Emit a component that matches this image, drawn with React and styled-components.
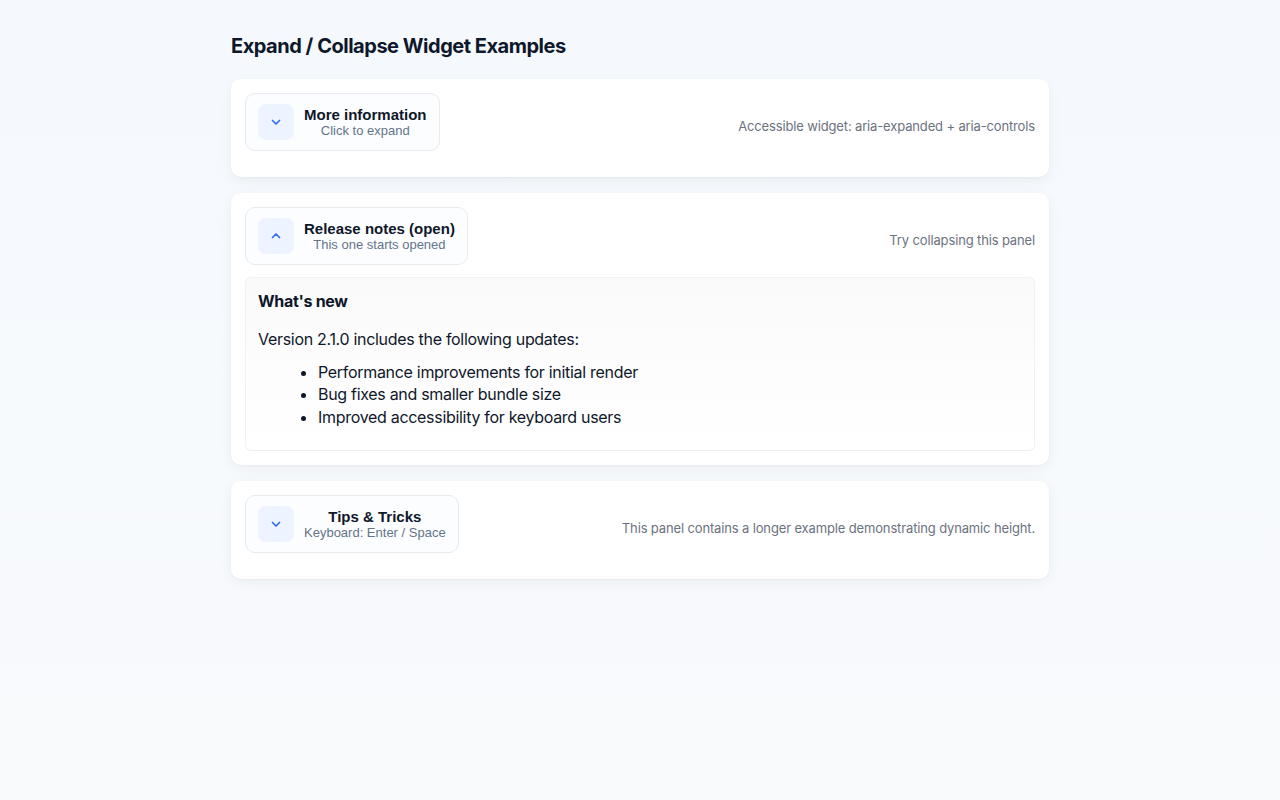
import { useState } from "react";
import styled, { createGlobalStyle } from "styled-components";

const GlobalStyle = createGlobalStyle`
  html, body {
    margin: 0;
    min-height: 100%;
  }
  body {
    background: linear-gradient(180deg, #f5f9fe 0%, #f8fafc 100%);
    min-height: 800px;
    font-family: Inter, "Noto Sans", sans-serif;
    color: #0f172a;
  }
`;

const Page = styled.div`
  width: 818px;
  margin: 0 auto;
  padding-top: 34px;
`;

const Heading = styled.h1`
  margin: 0 0 21px;
  font-size: 20px;
  line-height: 24px;
  font-weight: 700;
  letter-spacing: -0.024em;
  color: #0f172a;
`;

const List = styled.div`
  display: flex;
  flex-direction: column;
  gap: 16px;
`;

const Card = styled.section`
  background: #fff;
  border-radius: 10px;
  padding: 14px;
  box-shadow: 0 4px 14px rgba(15, 23, 42, 0.05), 0 1px 2px rgba(15, 23, 42, 0.03);
`;

const Header = styled.div`
  display: flex;
  align-items: center;
  justify-content: space-between;
  margin-bottom: 12px;
`;

const Toggle = styled.button`
  display: flex;
  align-items: center;
  gap: 10px;
  padding: 10px 12px;
  background: #fcfdfe;
  border: 1px solid #e7eaef;
  border-radius: 10px;
  font-family: "Liberation Sans", Arial, sans-serif;
  cursor: pointer;
`;

const IconBox = styled.span`
  width: 36px;
  height: 36px;
  border-radius: 8px;
  background: #eef4ff;
  display: flex;
  align-items: center;
  justify-content: center;
  color: #2f6ff0;
`;

const Labels = styled.span`
  display: flex;
  flex-direction: column;
  align-items: center;
`;

const Label = styled.span`
  font-size: 15px;
  line-height: 17px;
  font-weight: 700;
  color: #0f172a;
`;

const Sub = styled.span`
  font-size: 13px;
  line-height: 15px;
  color: #64748b;
`;

const Hint = styled.div`
  font-size: 13px;
  color: #6b7280;
  letter-spacing: -0.011em;
  margin-top: 8px;
`;

const Body = styled.div`
  border: 1px solid #eef1f6;
  border-bottom-color: #e6edf6;
  border-radius: 6px;
  background: linear-gradient(180deg, #fafafa 0%, #ffffff 100%);
  padding: 12px;
  letter-spacing: -0.019em;
`;

const BodyTitle = styled.h4`
  margin: 0 0 16px;
  font-size: 16px;
  line-height: 22px;
  font-weight: 700;
`;

const Para = styled.p`
  margin: 0 0 10px;
  font-size: 16px;
  line-height: 22.5px;
`;

const Bullets = styled.ul`
  margin: 0 0 10px;
  padding-left: 60px;
  font-size: 16px;
  line-height: 22.5px;
`;

const Chevron = ({ open }) => (
  <svg width="12" height="12" viewBox="0 0 12 12" fill="none">
    <polyline
      points={open ? "2.5,7.5 6,4 9.5,7.5" : "2.5,4.5 6,8 9.5,4.5"}
      stroke="currentColor"
      strokeWidth="1.7"
      strokeLinecap="round"
      strokeLinejoin="round"
    />
  </svg>
);

const panels = [
  {
    id: "more",
    title: "More information",
    sub: "Click to expand",
    hint: "Accessible widget: aria-expanded + aria-controls",
    open: false,
  },
  {
    id: "release",
    title: "Release notes (open)",
    sub: "This one starts opened",
    hint: "Try collapsing this panel",
    open: true,
  },
  {
    id: "tips",
    title: "Tips & Tricks",
    sub: "Keyboard: Enter / Space",
    hint: "This panel contains a longer example demonstrating dynamic height.",
    open: false,
  },
];

function Panel({ panel }) {
  const [open, setOpen] = useState(panel.open);
  return (
    <Card>
      <Header>
        <Toggle
          aria-expanded={open}
          aria-controls={`${panel.id}-body`}
          onClick={() => setOpen(!open)}
        >
          <IconBox>
            <Chevron open={open} />
          </IconBox>
          <Labels>
            <Label>{panel.title}</Label>
            <Sub>{panel.sub}</Sub>
          </Labels>
        </Toggle>
        <Hint>{panel.hint}</Hint>
      </Header>
      {open && (
        <Body id={`${panel.id}-body`}>
          <BodyTitle>What's new</BodyTitle>
          <Para>Version 2.1.0 includes the following updates:</Para>
          <Bullets>
            <li>Performance improvements for initial render</li>
            <li>Bug fixes and smaller bundle size</li>
            <li>Improved accessibility for keyboard users</li>
          </Bullets>
        </Body>
      )}
    </Card>
  );
}

export default function App() {
  return (
    <>
      <GlobalStyle />
      <Page>
        <Heading>Expand / Collapse Widget Examples</Heading>
        <List>
          {panels.map((p) => (
            <Panel key={p.id} panel={p} />
          ))}
        </List>
      </Page>
    </>
  );
}
